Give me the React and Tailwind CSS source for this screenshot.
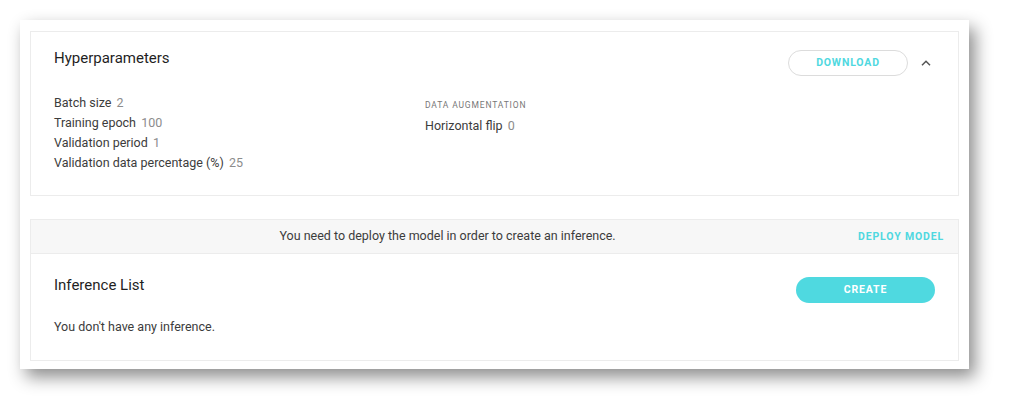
import React from 'react';

const params = [
    { label: 'Batch size', value: '2' },
    { label: 'Training epoch', value: '100' },
    { label: 'Validation period', value: '1' },
    { label: 'Validation data percentage (%)', value: '25' },
];

const ChevronUp = () => (
    <svg width="10" height="6" viewBox="0 0 10 6" fill="none">
        <path d="M1 5.2 L5 1.3 L9 5.2" stroke="#555" strokeWidth="1.5" />
    </svg>
);

const App = () => {
    return (
        <div className="min-h-screen bg-white p-5 font-['Roboto','Liberation_Sans',sans-serif]">
            <div className="w-[949px] bg-white pt-[11px] px-[10px] pb-[8px] shadow-[6px_8px_16px_rgba(0,0,0,0.45)]">
                {/* Hyperparameters */}
                <div className="border border-[#ececec] px-[23px] pt-[16px] pb-[22px]">
                    <div className="flex items-start justify-between">
                        <h2 className="text-[15px] leading-[20px] font-normal text-[#1f1f1f]">Hyperparameters</h2>
                        <div className="flex items-center mt-[2px]">
                            <button className="w-[120px] h-[26px] rounded-full border border-[#dcdcdc] text-[10.5px] font-bold tracking-[0.08em] text-[#4fd8e0]">
                                DOWNLOAD
                            </button>
                            <span className="ml-[13px] mr-[4px] flex items-center">
                                <ChevronUp />
                            </span>
                        </div>
                    </div>
                    <div className="flex mt-[17px]">
                        <div className="w-[371px]">
                            {params.map((p) => (
                                <div key={p.label} className="text-[12.5px] leading-[20px] text-[#3c3c3c]">
                                    {p.label} <span className="ml-[2px] text-[#8c8c8c]">{p.value}</span>
                                </div>
                            ))}
                        </div>
                        <div>
                            <div className="mt-[5px] text-[8.5px] leading-[14px] tracking-[0.1em] text-[#777]">DATA AUGMENTATION</div>
                            <div className="mt-[4px] text-[12.5px] leading-[20px] text-[#3c3c3c]">
                                Horizontal flip <span className="ml-[2px] text-[#8c8c8c]">0</span>
                            </div>
                        </div>
                    </div>
                </div>

                {/* Inference */}
                <div className="mt-[23px] border border-[#ececec]">
                    <div className="flex items-center h-[34px] bg-[#f7f7f7] border-b border-[#ececec]">
                        <p className="flex-1 pl-[20px] text-center text-[12.5px] text-[#3c3c3c]">
                            You need to deploy the model in order to create an inference.
                        </p>
                        <button className="pr-[14px] pl-[14px] text-[10.5px] font-bold tracking-[0.08em] text-[#4fd8e0]">
                            DEPLOY MODEL
                        </button>
                    </div>
                    <div className="px-[23px] pt-[21px] pb-[23px]">
                        <div className="flex items-start justify-between">
                            <h2 className="text-[15px] leading-[20px] font-normal text-[#1f1f1f]">Inference List</h2>
                            <button className="mt-[2px] w-[139px] h-[26px] rounded-full bg-[#4fd9e0] text-white text-[10.5px] font-bold tracking-[0.08em]">
                                CREATE
                            </button>
                        </div>
                        <p className="mt-[14px] text-[12.5px] leading-[20px] text-[#3c3c3c]">You don't have any inference.</p>
                    </div>
                </div>
            </div>
        </div>
    );
};

export default App;
